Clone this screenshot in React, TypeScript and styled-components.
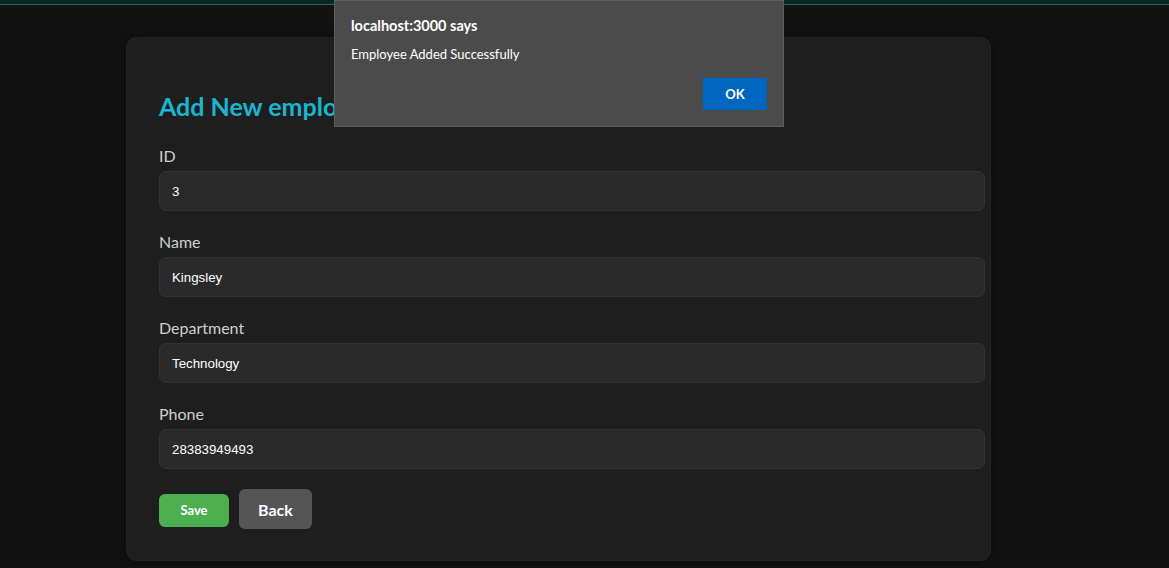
import React from "react";
import styled, { createGlobalStyle } from "styled-components";

const Global = createGlobalStyle`
  html, body { margin: 0; padding: 0; background: #121212; }
  body { font-family: Lato, "Open Sans", sans-serif; }
  * { box-sizing: content-box; }
`;

const Page = styled.div`
  position: relative;
  width: 1169px;
  height: 568px;
  overflow: hidden;
  background: #121212;
`;

const TopStrip = styled.div`
  height: 4px;
  background: #082823;
  border-bottom: 1px solid #2c5f56;
`;

const Main = styled.div`
  display: flex;
  padding-top: 33px;
  padding-left: 127px;
`;

const Card = styled.div`
  width: 799px;
  padding: 32px 32px 31px;
  background: #1e1e1e;
  border-radius: 10px;
  box-shadow: 0 0 0 1px #242424, 0 2px 12px rgba(0, 0, 0, 0.5);
`;

const Title = styled.h2`
  margin: 20px 0 24px;
  font-family: Lato, sans-serif;
  font-size: 25px;
  line-height: 32px;
  font-weight: 700;
  color: #1ab5cf;
`;

const Group = styled.div`
  margin-bottom: 21px;
`;

const Label = styled.label`
  display: block;
  font-family: Lato, sans-serif;
  font-size: 16px;
  line-height: 20px;
  color: #cfcfcf;
  margin-bottom: 5px;
`;

const Input = styled.input`
  display: block;
  width: calc(100% + 1px);
  height: 38px;
  padding: 0 12px;
  border: 1px solid #333333;
  border-radius: 7px;
  background: #2a2a2a;
  color: #ffffff;
  font-family: "Liberation Sans", Arial, sans-serif;
  font-size: 13.3px;
  outline: none;
`;

const Actions = styled.div`
  display: flex;
  align-items: center;
  gap: 10px;
  margin-top: -1px;
`;

const Button = styled.button<{ $variant: "save" | "back" }>`
  border: none;
  border-radius: 6px;
  color: #ffffff;
  font-family: Lato, sans-serif;
  font-weight: 700;
  cursor: pointer;
  padding: 0;
  background: ${(p) => (p.$variant === "save" ? "#4caf50" : "#555555")};
  width: ${(p) => (p.$variant === "save" ? "70px" : "73px")};
  height: ${(p) => (p.$variant === "save" ? "33px" : "40px")};
  margin-top: ${(p) => (p.$variant === "save" ? "2px" : "0")};
  font-size: ${(p) => (p.$variant === "save" ? "13px" : "16px")};
`;

const Dialog = styled.div`
  position: absolute;
  left: 334px;
  top: 0;
  width: 448px;
  height: 125px;
  background: #4b4b4b;
  border: 1px solid #5e5e5e;
  font-family: Lato, "Open Sans", sans-serif;
  color: #ffffff;
  display: flex;
  flex-direction: column;
`;

const DialogTitle = styled.div`
  margin: 17px 0 0 16px;
  font-size: 14.5px;
  line-height: 16px;
  font-weight: 700;
`;

const DialogMessage = styled.div`
  margin: 12px 0 0 16px;
  font-size: 13px;
  line-height: 16px;
`;

const DialogFooter = styled.div`
  display: flex;
  justify-content: flex-end;
  padding: 0 16px;
  margin-top: 16px;
`;

const OkButton = styled.button`
  width: 64px;
  height: 32px;
  border: none;
  background: #0067c0;
  color: #ffffff;
  font-family: Lato, sans-serif;
  font-weight: 700;
  font-size: 13px;
  padding: 0;
`;

const fields = [
  { label: "ID", value: "3" },
  { label: "Name", value: "Kingsley" },
  { label: "Department", value: "Technology" },
  { label: "Phone", value: "28383949493" },
];

export default function App() {
  return (
    <Page>
      <Global />
      <TopStrip />
      <Main>
        <Card>
          <Title>Add New employee</Title>
          {fields.map((f) => (
            <Group key={f.label}>
              <Label>{f.label}</Label>
              <Input defaultValue={f.value} />
            </Group>
          ))}
          <Actions>
            <Button $variant="save">Save</Button>
            <Button $variant="back">Back</Button>
          </Actions>
        </Card>
      </Main>
      <Dialog>
        <DialogTitle>localhost:3000 says</DialogTitle>
        <DialogMessage>Employee Added Successfully</DialogMessage>
        <DialogFooter>
          <OkButton>OK</OkButton>
        </DialogFooter>
      </Dialog>
    </Page>
  );
}
